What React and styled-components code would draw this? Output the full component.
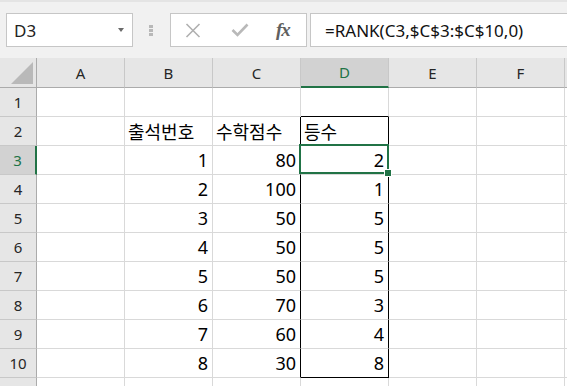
import React from 'react';
import styled, { createGlobalStyle } from 'styled-components';

const GREEN = '#217346';
const GRID = '#d9d9d9';

const Global = createGlobalStyle`
  html, body { margin: 0; padding: 0; background: #ffffff; overflow: hidden; }
  body { font-family: "Noto Sans", "Noto Sans CJK KR", sans-serif; }
`;

const Page = styled.div`
  width: 567px;
  height: 386px;
  overflow: hidden;
  display: flex;
  flex-direction: column;
`;

const Toolbar = styled.div`
  height: 58px;
  flex: none;
  box-sizing: border-box;
  background: #f1f1f1;
  border-top: 2px solid #e4e4e4;
  display: flex;
  align-items: center;
  padding-left: 6px;
`;

const NameBox = styled.div`
  width: 127px;
  height: 34px;
  box-sizing: border-box;
  background: #fff;
  border: 1px solid #c6c6c6;
  display: flex;
  align-items: center;
  justify-content: space-between;
  padding: 0 8px 0 7px;
  font-size: 17px;
  color: #222;
`;

const Caret = styled.span`
  width: 0;
  height: 0;
  border-left: 3.5px solid transparent;
  border-right: 3.5px solid transparent;
  border-top: 4px solid #6a6a6a;
`;

const Grip = styled.div`
  display: flex;
  flex-direction: column;
  gap: 1px;
  margin: 0 17px 0 16px;
`;

const GripDot = styled.span`
  width: 4px;
  height: 3px;
  background: #b8b8b8;
`;

const FxBox = styled.div`
  width: 137px;
  height: 34px;
  box-sizing: border-box;
  background: #fff;
  border: 1px solid #c6c6c6;
  display: flex;
  align-items: center;
  padding-left: 14px;
`;

const IconSlot = styled.span`
  display: flex;
  align-items: center;
  justify-content: center;
  width: ${p => p.$w}px;
  margin-right: ${p => p.$gap}px;
`;

const Fx = styled.span`
  font-family: "Liberation Serif", "DejaVu Serif", serif;
  font-style: italic;
  font-weight: bold;
  font-size: 19px;
  color: #606060;
  letter-spacing: -1px;
`;

const FormulaInput = styled.div`
  flex: 1;
  height: 34px;
  margin-left: 3px;
  box-sizing: border-box;
  background: #fff;
  border: 1px solid #c6c6c6;
  border-right: none;
  display: flex;
  align-items: center;
  padding-left: 14px;
  font-size: 17px;
  color: #111;
  white-space: nowrap;
`;

const Sheet = styled.div`
  display: grid;
  grid-template-columns: 37px repeat(6, 88px) 1fr;
  grid-template-rows: 30px repeat(11, 29px);
  flex: none;
`;

const Corner = styled.div`
  background: #e6e6e6;
  box-sizing: border-box;
  border-right: 1px solid #ababab;
  border-bottom: 1px solid #ababab;
  display: flex;
  align-items: flex-end;
  justify-content: flex-end;
  padding: 0 3px 3px 0;
`;

const ColHeader = styled.div`
  box-sizing: border-box;
  background: ${p => (p.$active ? '#d2d2d2' : '#e6e6e6')};
  color: ${p => (p.$active ? GREEN : '#262626')};
  border-right: 1px solid #c8c8c8;
  border-bottom: ${p => (p.$active ? `2px solid ${GREEN}` : '1px solid #ababab')};
  display: flex;
  align-items: center;
  justify-content: center;
  font-size: 15px;
`;

const RowHeader = styled.div`
  box-sizing: border-box;
  background: ${p => (p.$active ? '#d2d2d2' : '#e6e6e6')};
  color: ${p => (p.$active ? GREEN : '#262626')};
  border-right: ${p => (p.$active ? `2px solid ${GREEN}` : '1px solid #ababab')};
  border-bottom: 1px solid #c8c8c8;
  display: flex;
  align-items: center;
  justify-content: center;
  font-size: 15px;
`;

const Cell = styled.div`
  position: relative;
  box-sizing: border-box;
  border-right: 1px solid ${p => p.$right || GRID};
  border-bottom: 1px solid ${p => p.$bottom || GRID};
  display: flex;
  align-items: center;
  justify-content: ${p => (p.$num ? 'flex-end' : 'flex-start')};
  padding: 0 ${p => (p.$num ? '4px' : '3px')} 0 3px;
  font-size: 18px;
  color: #000;
  white-space: nowrap;
`;

const Selection = styled.div`
  position: absolute;
  top: -2px;
  left: -2px;
  right: -1px;
  bottom: 0;
  border: 2px solid ${GREEN};
  pointer-events: none;
  z-index: 2;
`;

const FillHandle = styled.span`
  position: absolute;
  right: -5px;
  bottom: -5px;
  width: 6px;
  height: 6px;
  background: ${GREEN};
  border: 1px solid #fff;
`;

const COLS = ['A', 'B', 'C', 'D', 'E', 'F', ''];
const scores = [
  [1, 80, 2],
  [2, 100, 1],
  [3, 50, 5],
  [4, 50, 5],
  [5, 50, 5],
  [6, 70, 3],
  [7, 60, 4],
  [8, 30, 8],
];

function cellValue(row, col) {
  if (row === 2) {
    if (col === 'B') return '출석번호';
    if (col === 'C') return '수학점수';
    if (col === 'D') return '등수';
  }
  if (row >= 3 && row <= 10) {
    const r = scores[row - 3];
    if (col === 'B') return r[0];
    if (col === 'C') return r[1];
    if (col === 'D') return r[2];
  }
  return '';
}

function borders(row, col) {
  const inBox = row >= 2 && row <= 10;
  let right;
  let bottom;
  if (inBox && (col === 'C' || col === 'D')) right = '#000';
  if (col === 'D' && (row === 1 || row === 2 || row === 10)) bottom = '#000';
  return { right, bottom };
}

export default function App() {
  const rows = Array.from({ length: 11 }, (_, i) => i + 1);
  return (
    <Page>
      <Global />
      <Toolbar>
        <NameBox>
          <span>D3</span>
          <Caret />
        </NameBox>
        <Grip>
          <GripDot />
          <GripDot />
          <GripDot />
        </Grip>
        <FxBox>
          <IconSlot $w={16} $gap={30}>
            <svg width="16" height="15" viewBox="0 0 16 15">
              <path d="M1.5 1 L14.5 14 M14.5 1 L1.5 14" stroke="#b0b0b0" strokeWidth="1.6" fill="none" />
            </svg>
          </IconSlot>
          <IconSlot $w={18} $gap={27}>
            <svg width="18" height="14" viewBox="0 0 18 14">
              <path d="M1.5 7 L6.5 12 L16.5 1.5" stroke="#b9b9b9" strokeWidth="2.6" fill="none" />
            </svg>
          </IconSlot>
          <Fx>fx</Fx>
        </FxBox>
        <FormulaInput>=RANK(C3,$C$3:$C$10,0)</FormulaInput>
      </Toolbar>
      <Sheet>
        <Corner>
          <svg width="22" height="22" viewBox="0 0 22 22">
            <polygon points="22,0 22,22 0,22" fill="#b9b9b9" />
          </svg>
        </Corner>
        {COLS.map((c, i) => (
          <ColHeader key={i} $active={c === 'D'}>{c}</ColHeader>
        ))}
        {rows.map(r => (
          <React.Fragment key={r}>
            <RowHeader $active={r === 3}>{r <= 10 ? r : ''}</RowHeader>
            {COLS.map((c, i) => {
              const v = cellValue(r, c);
              const b = borders(r, c);
              return (
                <Cell key={i} $num={typeof v === 'number'} $right={b.right} $bottom={b.bottom}>
                  {v}
                  {r === 3 && c === 'D' && (
                    <Selection>
                      <FillHandle />
                    </Selection>
                  )}
                </Cell>
              );
            })}
          </React.Fragment>
        ))}
      </Sheet>
    </Page>
  );
}
